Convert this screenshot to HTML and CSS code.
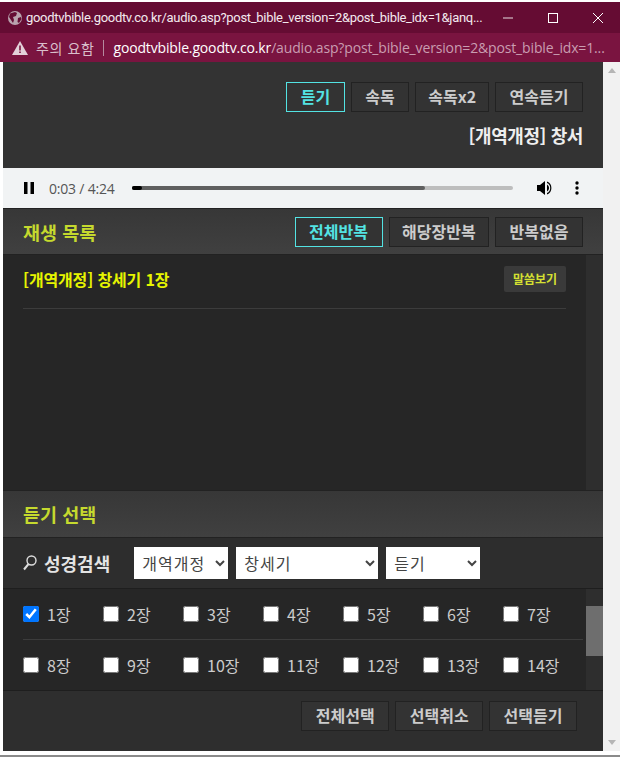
FILE: index.html
```html
<!DOCTYPE html>
<html lang="ko">
<head>
<meta charset="UTF-8">
<title>goodtvbible.goodtv.co.kr</title>
<link rel="stylesheet" href="styles.css">
</head>
<body>
<div class="win">
  <div class="titlebar">
    <svg class="globe" width="16" height="16" viewBox="0 0 16 16"><circle cx="8" cy="8" r="7" fill="#b9a3ae"/><path d="M3 3.500 8 2l2 1-1 3-3 1 1 3-1 3-2-3-2-3zM11 8l3-1 .5 2-2.500 4-1.500-1z" fill="#650c33"/></svg>
    <span class="title-url">goodtvbible.goodtv.co.kr/audio.asp?post_bible_version=2&amp;post_bible_idx=1&amp;janq...</span>
    <div class="win-btns">
      <svg width="12" height="12" viewBox="0 0 12 12"><path d="M1 6h10" stroke="#e8dde2" fill="none"/></svg>
      <svg width="12" height="12" viewBox="0 0 12 12"><rect x="1.500" y="1.500" width="9" height="9" stroke="#fff" fill="none"/></svg>
      <svg width="12" height="12" viewBox="0 0 12 12"><path d="M1 1l10 10M11 1 1 11" stroke="#fff" fill="none"/></svg>
    </div>
  </div>
  <div class="addrbar">
    <svg width="16" height="14" viewBox="0 0 16 14"><path d="M8 0l8 14H0z" fill="#e3d0d9"/><path d="M7.200 4.500h1.600v5H7.200zM7.200 10.500h1.600v1.600H7.200z" fill="#7a1440"/></svg>
    <span class="warn">주의 요함</span>
    <span class="addr-sep"></span>
    <span class="addr-url"><b>goodtvbible.goodtv.co.kr</b>/audio.asp?post_bible_version=2&amp;post_bible_idx=1...</span>
  </div>

  <div class="page">
    <div class="content">
      <div class="top">
        <div class="btns">
          <a class="btn on">듣기</a>
          <a class="btn">속독</a>
          <a class="btn tight">속독x2</a>
          <a class="btn">연속듣기</a>
        </div>
        <div class="now">[개역개정] 창서</div>
      </div>

      <div class="player">
        <svg width="10" height="12" viewBox="0 0 10 12"><path d="M0 0h3.500v12H0zM6.500 0H10v12H6.500z" fill="#000"/></svg>
        <span class="time">0:03 / 4:24</span>
        <div class="track"><div class="loaded"></div><div class="played"></div></div>
        <svg class="vol" width="16" height="16" viewBox="0 0 16 16"><path d="M0 5h3l5-4v14l-5-4H0z" fill="#000"/><path d="M10 4.500a4 4 0 0 1 0 7zM10 1.500a7 7 0 0 1 0 13v-1.500a5.500 5.500 0 0 0 0-10z" fill="#000"/></svg>
        <svg class="more" width="4" height="14" viewBox="0 0 4 14"><circle cx="2" cy="2" r="1.700"/><circle cx="2" cy="7" r="1.700"/><circle cx="2" cy="12" r="1.700"/></svg>
      </div>

      <div class="head">
        <h2>재생 목록</h2>
        <div class="btns">
          <a class="btn on">전체반복</a>
          <a class="btn narrow">해당장반복</a>
          <a class="btn">반복없음</a>
        </div>
      </div>

      <div class="listwrap">
        <div class="list">
          <div class="item">
            <span class="item-name">[개역개정] 창세기 1장</span>
            <a class="view">말씀보기</a>
          </div>
        </div>
        <div class="track-v"></div>
      </div>

      <div class="head head2">
        <h2>듣기 선택</h2>
      </div>

      <div class="search">
        <svg width="14" height="16" viewBox="0 0 14 16"><circle cx="8.500" cy="5.500" r="4.500" fill="none" stroke="#ddd" stroke-width="1.400"/><path d="M5.500 9 1 14.500" stroke="#ddd" stroke-width="2" fill="none"/></svg>
        <strong>성경검색</strong>
        <select class="sel sel1"><option>개역개정</option></select>
        <select class="sel sel2"><option>창세기</option></select>
        <select class="sel sel1"><option>듣기</option></select>
      </div>

      <div class="listwrap">
        <div class="chapters">
          <div class="ch-row">
            <label class="ch"><input type="checkbox" checked>1장</label>
            <label class="ch"><input type="checkbox">2장</label>
            <label class="ch"><input type="checkbox">3장</label>
            <label class="ch"><input type="checkbox">4장</label>
            <label class="ch"><input type="checkbox">5장</label>
            <label class="ch"><input type="checkbox">6장</label>
            <label class="ch"><input type="checkbox">7장</label>
          </div>
          <div class="ch-row">
            <label class="ch"><input type="checkbox">8장</label>
            <label class="ch"><input type="checkbox">9장</label>
            <label class="ch"><input type="checkbox">10장</label>
            <label class="ch"><input type="checkbox">11장</label>
            <label class="ch"><input type="checkbox">12장</label>
            <label class="ch"><input type="checkbox">13장</label>
            <label class="ch"><input type="checkbox">14장</label>
          </div>
        </div>
        <div class="track-v"><div class="thumb-v"></div></div>
      </div>

      <div class="foot">
        <a class="btn">전체선택</a>
        <a class="btn">선택취소</a>
        <a class="btn">선택듣기</a>
      </div>
    </div>

    <div class="scroll">
      <span class="arrow up"></span>
      <span class="arrow down"></span>
    </div>
  </div>
</div>
</body>
</html>
```

FILE: styles.css
```css
html,body{margin:0;padding:0;height:100%;overflow:hidden;}
body{background:#fff;font-family:"Noto Sans CJK KR","Noto Sans",sans-serif;}
h2{margin:0;}
.win{height:757px;box-sizing:border-box;padding:2px 0 4px;border-bottom:2px solid #8a8a8a;background:#fff;
     display:flex;flex-direction:column;}

/* window chrome */
.titlebar{height:31px;flex:none;background:#650c33;display:flex;align-items:center;padding-left:7px;color:#f3e9ee;}
.globe{flex:none;}
.title-url{font:13px Roboto,sans-serif;margin-left:3px;white-space:nowrap;width:456px;flex:none;letter-spacing:-.3px;}
.win-btns{margin-left:auto;display:flex;gap:33px;padding-right:16px;align-items:center;}
.addrbar{height:29px;flex:none;background:#7a1440;display:flex;align-items:center;padding-left:12px;color:#d7b6c5;}
.warn{font-size:14px;margin-left:8px;letter-spacing:.6px;color:#d9bfcb;}
.addr-sep{width:1px;height:16px;background:#b58a9e;margin:0 9px;}
.addr-url{font:14px "Open Sans",sans-serif;white-space:nowrap;letter-spacing:-.15px;color:#c99db1;}
.addr-url b{font-weight:400;color:#fff;}

.page{flex:1;display:flex;padding-left:3px;min-height:0;}
.content{width:600px;display:flex;flex-direction:column;}
.scroll{width:17px;background:#f1f1f1;display:flex;flex-direction:column;justify-content:space-between;align-items:center;padding:6px 0;box-sizing:border-box;}
.arrow{width:0;height:0;border-left:4px solid transparent;border-right:4px solid transparent;}
.arrow.up{border-bottom:5px solid #b5b5b5;}
.arrow.down{border-top:5px solid #b5b5b5;}

/* buttons */
.btns{display:flex;gap:6px;justify-content:flex-end;}
.btn{box-sizing:border-box;height:30px;padding:0 13.500px;border:1px solid #222;background:#333;color:#ccc;
     font-size:16px;font-weight:700;line-height:27px;text-align:center;white-space:nowrap;}
.btn.narrow{padding:0 12.500px;}
.btn.tight{padding:0 12px;}
.btn.on{border-color:#53e3e3;color:#53e3e3;}

.top{height:106px;flex:none;box-sizing:border-box;background:#333;padding:20px 20px 0 0;}
.now{color:#eee;font-size:18px;font-weight:700;text-align:right;line-height:24px;margin-top:11px;letter-spacing:-.4px;}

/* audio */
.player{height:40px;flex:none;background:#f1f3f4;display:flex;align-items:center;padding-left:21px;box-sizing:border-box;color:#555;}
.time{font:14px "Open Sans",sans-serif;color:#555;margin-left:15px;white-space:nowrap;letter-spacing:-.2px;}
.track{position:relative;width:381px;height:4px;border-radius:2px;background:#bdbdbd;margin-left:17px;}
.loaded{position:absolute;left:0;top:0;height:4px;width:293px;background:#5f5f5f;border-radius:2px;}
.played{position:absolute;left:0;top:0;height:4px;width:10px;background:#000;border-radius:2px;}
.vol{margin-left:24px;}
.more{margin-left:22px;}

.head{height:47px;flex:none;box-sizing:border-box;border-top:1px solid #222;border-bottom:1px solid #222;background:linear-gradient(#373737,#404040);
      display:flex;align-items:center;justify-content:space-between;padding:0 20px;}
.head h2{color:#c5d92e;font-size:18.500px;font-weight:700;}
.head2{height:48px;}

.listwrap{display:flex;flex:none;}
.track-v{width:17px;background:#2e2e2e;flex:none;position:relative;}
.thumb-v{position:absolute;top:17px;left:0;width:17px;height:50px;background:#6e6e6e;}
.list{width:583px;height:235px;background:#262626;box-sizing:border-box;padding:0 20px;}
.item{height:54px;box-sizing:border-box;border-bottom:1px solid #3c3c3c;display:flex;align-items:center;justify-content:space-between;}
.item-name{color:#e6f500;font-size:16px;font-weight:700;letter-spacing:-.15px;margin-bottom:6px;}
.view{background:#3a3a3a;color:#d6e032;font-size:12px;font-weight:700;height:26px;line-height:26px;width:62px;text-align:center;border-radius:2px;margin-bottom:5px;}

.search{height:51px;flex:none;background:#2d2d2d;border-bottom:1px solid #1e1e1e;box-sizing:border-box;display:flex;align-items:center;padding-left:20px;color:#e4e4e4;}
.search strong{font-size:18px;font-weight:700;margin:0 24px 0 7px;white-space:nowrap;}
.sel{height:32px;border:0;border-radius:0;background:#fff;color:#444;font-family:"Noto Sans CJK KR",sans-serif;font-size:16px;letter-spacing:1px;padding:0 4px;margin-right:8px;}
.sel1{width:94px;}
.sel2{width:142px;}

.chapters{width:583px;height:101px;box-sizing:border-box;background:#262626;padding-left:20px;}
.ch-row{height:50px;display:flex;align-items:center;width:560px;}
.ch-row:first-child{border-bottom:1px solid #3c3c3c;}
.ch{width:80px;flex:none;display:flex;align-items:center;color:#ccc;font-size:16px;}
.ch input{width:16px;height:16px;margin:0 8px 0 0;}

.foot{height:61px;flex:none;box-sizing:border-box;background:#2e2e2e;border-top:1px solid #1e1e1e;display:flex;justify-content:flex-end;gap:6px;padding:10px 26px 0 0;}
```
